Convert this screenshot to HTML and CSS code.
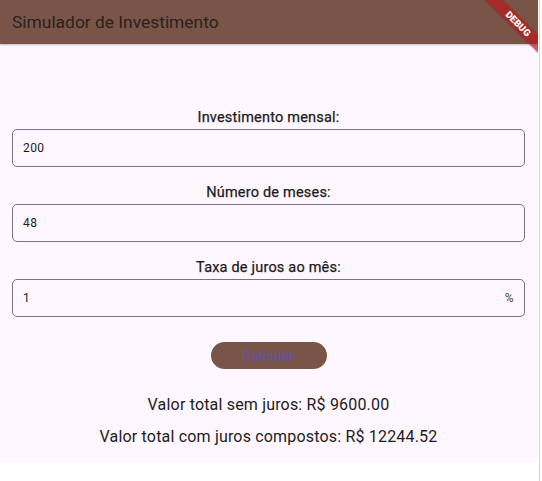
FILE: index.html
```html
<!DOCTYPE html>
<html lang="pt">
<head>
<meta charset="utf-8">
<link rel="stylesheet" href="styles.css">
</head>
<body>
<div class="page">
  <div class="app">
    <header class="appbar">
      <h1 class="title">Simulador de Investimento</h1>
    </header>
    <main class="content">
      <div class="field-group">
        <div class="label">Investimento mensal:</div>
        <div class="field"><span class="value">200</span></div>
      </div>
      <div class="field-group">
        <div class="label">Número de meses:</div>
        <div class="field"><span class="value">48</span></div>
      </div>
      <div class="field-group">
        <div class="label">Taxa de juros ao mês:</div>
        <div class="field"><span class="value">1</span><span class="suffix">%</span></div>
      </div>
      <div class="btn-row"><button class="btn">Calcular</button></div>
      <div class="result r1">Valor total sem juros: R$ 9600.00</div>
      <div class="result r2">Valor total com juros compostos: R$ 12244.52</div>
    </main>
    <div class="banner"><span>DEBUG</span></div>
  </div>
  <div class="edge"></div>
</div>
</body>
</html>
```
FILE: styles.css
```css
* { box-sizing: border-box; }
html, body { margin: 0; padding: 0; background: #ffffff; }
body { font-family: Roboto, "Noto Sans", sans-serif; color: #1d1b20; }
.page { display: flex; width: 542px; height: 481px; }
.app {
  position: relative;
  width: 538px;
  height: 462px;
  background: #fef7ff;
  overflow: hidden;
  display: flex;
  flex-direction: column;
}
.edge { width: 1px; height: 481px; margin-left: 1px; background: #d8d8d8; }
.appbar {
  height: 44px;
  background: #795548;
  display: flex;
  align-items: center;
  padding-left: 12px;
  box-shadow: 0 1px 2px rgba(0,0,0,0.25);
  position: relative;
  z-index: 1;
}
.title {
  margin: 0;
  font-size: 17.4px;
  font-weight: 400;
  color: #2a211e;
}
.content {
  padding: 64px 13px 0 12px;
  display: flex;
  flex-direction: column;
}
.field-group { display: flex; flex-direction: column; margin-bottom: 16px; }
.label {
  text-align: center;
  font-size: 14.5px;
  font-weight: 400;
  letter-spacing: 0.2px;
  line-height: 20px;
  height: 21px;
  color: #1d1b20;
  -webkit-text-stroke: 0.25px #1d1b20;
}
.field {
  height: 38px;
  border: 1px solid #79747e;
  border-radius: 5px;
  display: flex;
  align-items: center;
  justify-content: space-between;
  padding: 0 10px 0 10px;
  font-size: 12px;
  letter-spacing: 0.4px;
  color: #1d1b20;
}
.suffix { color: #49454f; }
.btn-row { display: flex; justify-content: center; margin-top: 9px; }
.btn {
  width: 116px;
  height: 27px;
  border: none;
  border-radius: 14px;
  background: #795548;
  color: #6750a4;
  font-family: Roboto, sans-serif;
  font-size: 14px;
  font-weight: 500;
  letter-spacing: 0.1px;
  padding: 0;
}
.result {
  text-align: center;
  font-size: 16px;
  letter-spacing: 0.18px;
  line-height: 24px;
  color: #1d1b20;
}
.r1 { margin-top: 24px; }
.r2 { margin-top: 8px; }
.banner {
  position: absolute;
  left: 478px;
  top: 18px;
  width: 80px;
  height: 12px;
  background: rgba(183, 28, 28, 0.72);
  transform: rotate(45deg);
  transform-origin: 40px 6px;
  display: flex;
  align-items: center;
  justify-content: center;
  z-index: 2;
  box-shadow: 0 0 2px rgba(127,0,0,0.5);
}
.banner span {
  color: #ffffff;
  font-size: 9.5px;
  font-weight: 900;
  letter-spacing: 0.1px;
  line-height: 1;
}
```
